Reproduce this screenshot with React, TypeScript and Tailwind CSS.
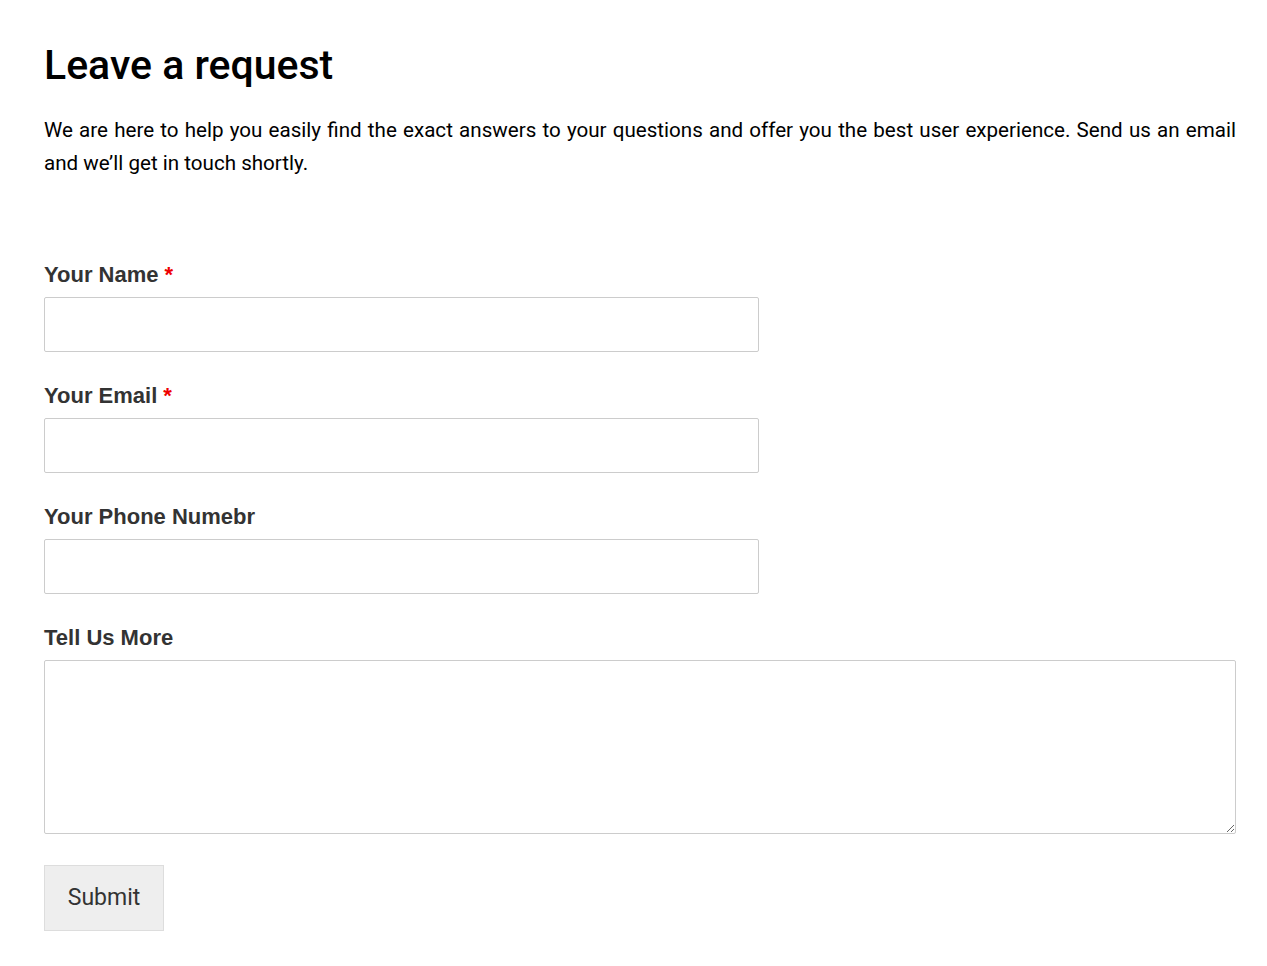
export default function App() {
  const fields = [
    { label: "Your Name", required: true },
    { label: "Your Email", required: true },
    { label: "Your Phone Numebr", required: false },
  ];

  return (
    <div className="min-h-screen bg-white font-['Roboto',sans-serif]">
      <div className="w-[1192px] ml-[44px] pt-[40px] pb-[35px]">
        <h1 className="text-[41px] leading-[50px] font-medium text-black">Leave a request</h1>
        <p className="mt-[24px] text-[20.6px] leading-[33px] text-black text-justify">
          We are here to help you easily find the exact answers to your questions and offer you the best user
          experience. Send us an email and we’ll get in touch shortly.
        </p>

        <form className="mt-[80px]" onSubmit={(e) => e.preventDefault()}>
          {fields.map((f) => (
            <div key={f.label} className="mb-[29px]">
              <label className="block font-['Liberation_Sans',Arial,sans-serif] text-[22px] leading-[30px] font-bold text-[#333]">
                {f.label}
                {f.required && <span className="ml-[6px] text-[#e00]">*</span>}
              </label>
              <input
                type="text"
                className="mt-[7px] block w-[715px] h-[55px] rounded-[2px] border border-[#ccc] bg-white px-3 text-[20px] outline-none"
              />
            </div>
          ))}

          <div>
            <label className="block font-['Liberation_Sans',Arial,sans-serif] text-[22px] leading-[30px] font-bold text-[#333]">
              Tell Us More
            </label>
            <textarea className="mt-[7px] block w-full h-[174px] rounded-[2px] border border-[#ccc] bg-white px-3 py-2 text-[20px] outline-none" />
          </div>

          <button
            type="submit"
            className="mt-[31px] w-[120px] h-[66px] border border-[#ddd] bg-[#eee] text-[23px] text-[#333]"
          >
            Submit
          </button>
        </form>
      </div>
    </div>
  );
}
